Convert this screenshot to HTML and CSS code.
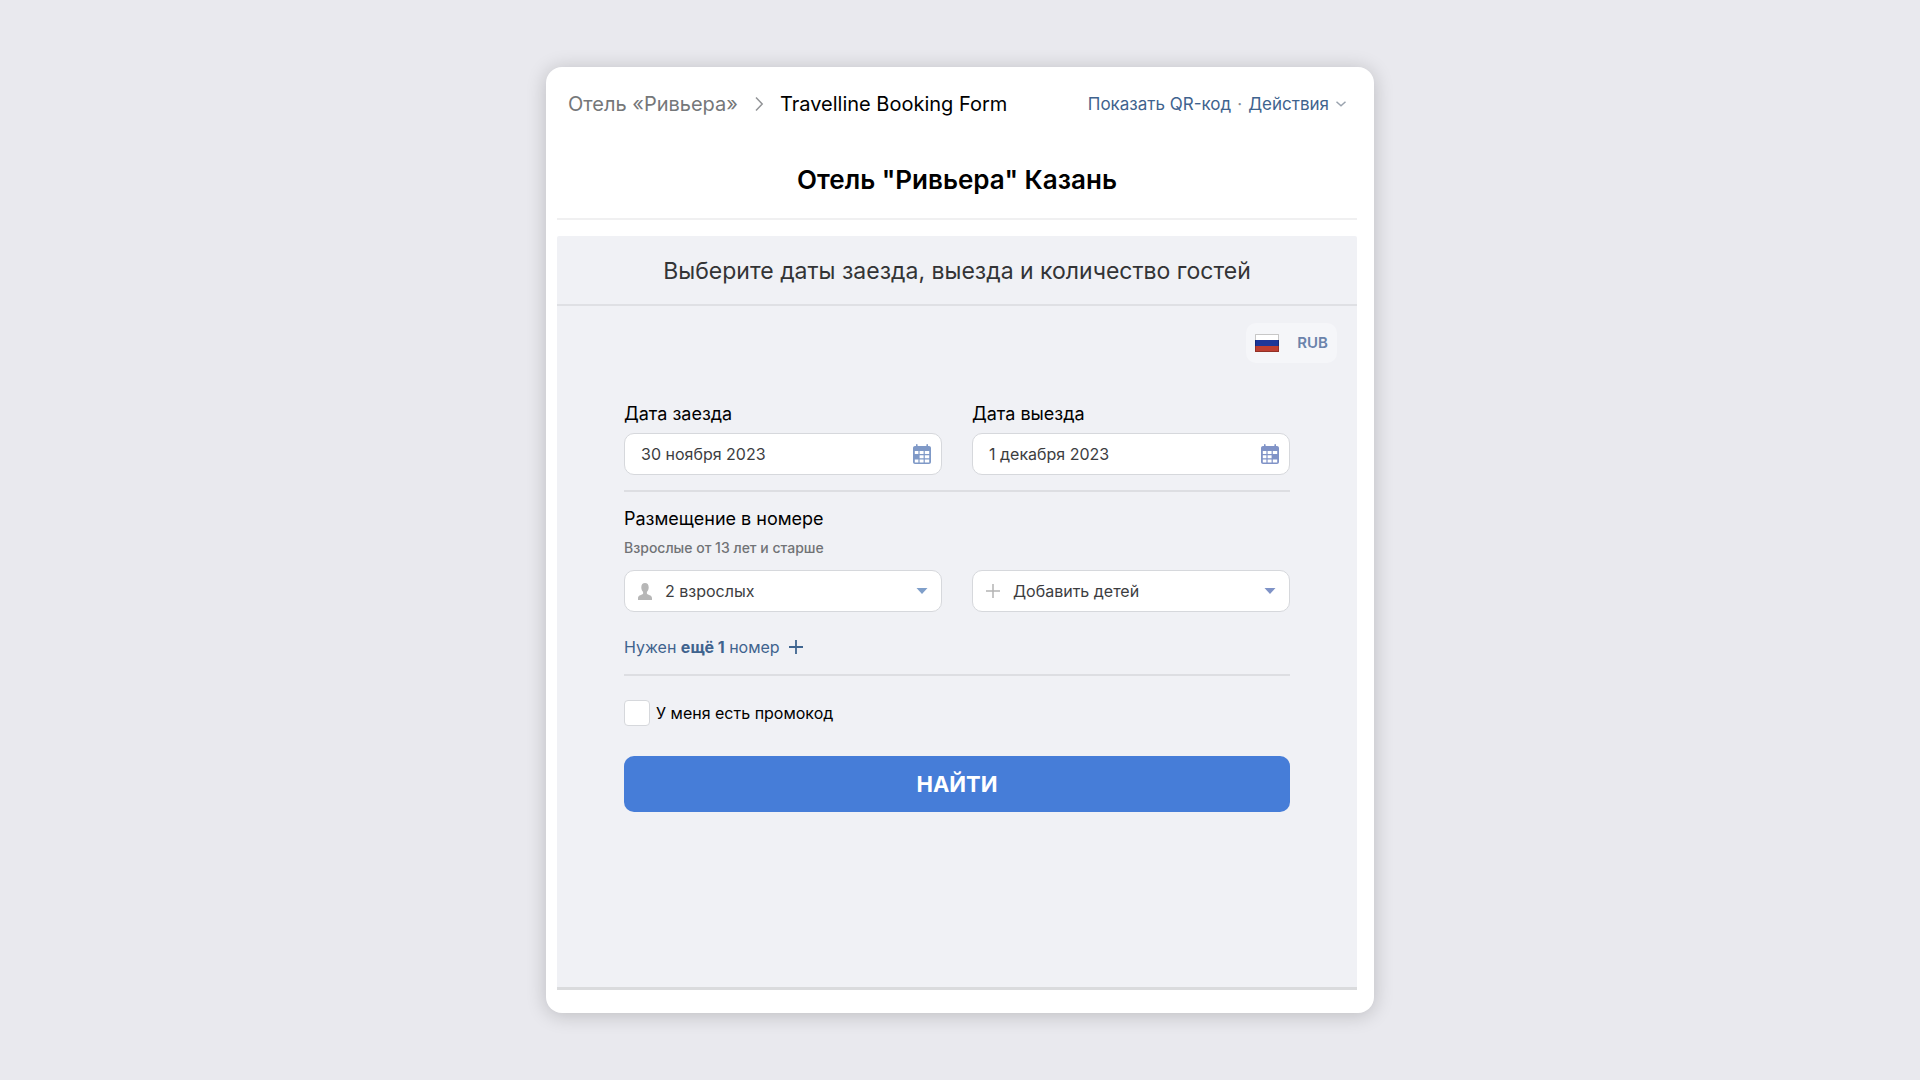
FILE: index.html
```html
<!DOCTYPE html>
<html lang="ru">
<head>
<meta charset="utf-8">
<meta name="viewport" content="width=device-width, initial-scale=1">
<title>Travelline Booking Form</title>
<link rel="stylesheet" href="styles.css">
</head>
<body>
<main class="card">
  <header class="topbar">
    <nav class="crumbs">
      <a class="crumb-link" href="#">Отель «Ривьера»</a>
      <svg class="crumb-arrow" width="10" height="16" viewBox="0 0 10 16"><path d="M2 1.5 8.2 8 2 14.5"/></svg>
      <span>Travelline Booking Form</span>
    </nav>
    <div class="actions">
      <a href="#">Показать QR-код</a>
      <span class="dot">·</span>
      <a class="menu-link" href="#">Действия
        <svg class="chevron" width="12" height="8" viewBox="0 0 12 8"><path d="M1.5 1.700 6 5.700l4.500-4"/></svg>
      </a>
    </div>
  </header>
  <h1 class="title">Отель "Ривьера" Казань</h1>
  <section class="panel">
    <h2 class="panel-title">Выберите даты заезда, выезда и количество гостей</h2>
    <div class="locale">
      <button class="locale-button" type="button" aria-label="Русский">
        <svg width="24" height="18" viewBox="0 0 24 18"><path fill="#fff" d="M0 0h24v6H0z"/><path fill="#1d3799" d="M0 6h24v6H0z"/><path fill="#bd3e31" d="M0 12h24v6H0z"/><path fill="none" stroke="#000" stroke-opacity=".22" d="M.5.5h23v17H.5z"/></svg>
      </button>
      <button class="locale-button" type="button">RUB</button>
    </div>
    <form class="form">
      <div class="columns ruled">
        <div class="group">
          <label class="label" for="arrival">Дата заезда</label>
          <div class="field">
            <input class="control" id="arrival" type="text" value="30 ноября 2023">
            <svg class="icon-right" width="20" height="20" viewBox="0 0 20 20"><path fill="#7f99c7" fill-rule="evenodd" d="M3 2h1V.8C4 .3 4.300 0 4.800 0s.8.300.8.800V2h8.800V.8c0-.5.300-.8.800-.8s.8.300.8.800V2h1c1.100 0 2 .9 2 2v14c0 1.100-.9 2-2 2H3c-1.100 0-2-.9-2-2V4c0-1.100.9-2 2-2zM2.800 7v3h3.600V7zM7.600 7v3h4V7zM12.800 7v3h4.400V7zM7.600 11.200v3h4v-3zM12.800 11.200v3h4.400v-3zM2.800 15.400v3h3.600v-3zM7.600 15.400v3h4v-3zM12.800 15.400v3h4.400v-3z"/></svg>
          </div>
        </div>
        <div class="group">
          <label class="label" for="departure">Дата выезда</label>
          <div class="field">
            <input class="control" id="departure" type="text" value="1 декабря 2023">
            <svg class="icon-right" width="20" height="20" viewBox="0 0 20 20"><path fill="#8093c7" fill-rule="evenodd" d="M3 2h1V.8C4 .3 4.300 0 4.800 0s.8.300.8.800V2h8.800V.8c0-.5.300-.8.800-.8s.8.300.8.800V2h1c1.100 0 2 .9 2 2v14c0 1.100-.9 2-2 2H3c-1.100 0-2-.9-2-2V4c0-1.100.9-2 2-2zM2.800 7v3h3.600V7zM7.600 7v3h4V7zM12.800 7v3h4.400V7zM2.800 11.200v3h3.600v-3zM7.600 11.200v3h4v-3zM2.800 15.400v3h3.600v-3zM7.600 15.400v3h4v-3zM12.800 15.400v3h4.400v-3z"/></svg>
          </div>
        </div>
      </div>
      <div class="rooms ruled">
        <h3 class="label">Размещение в номере</h3>
        <p class="hint">Взрослые от 13 лет и старше</p>
        <div class="columns">
          <div class="field">
            <svg class="icon-left" width="14" height="17" viewBox="0 0 14 17"><path fill="#b7b7b7" d="M7 0c2.300 0 3.700 1.600 3.700 4.200 0 2-.7 3.700-1.800 4.800v1.800c.5 1 5.100 1.200 5.100 4.400V17H0v-1.800c0-3.200 4.600-3.400 5.100-4.400V9C4 7.900 3.300 6.200 3.300 4.200 3.300 1.600 4.700 0 7 0z"/></svg>
            <select class="control with-icon" aria-label="Взрослые"><option>2 взрослых</option></select>
            <svg class="icon-right" width="20" height="6" viewBox="0 0 20 6"><path fill="#7f9fca" d="M4.500 0h11L10 6z"/></svg>
          </div>
          <div class="field">
            <svg class="icon-left" width="14" height="14" viewBox="0 0 14 14"><path fill="none" stroke="#b4b4b4" stroke-width="1.500" d="M7 0v14M0 7h14"/></svg>
            <select class="control with-icon" aria-label="Дети"><option>Добавить детей</option></select>
            <svg class="icon-right" width="20" height="6" viewBox="0 0 20 6"><path fill="#7f93c7" d="M4.500 0h11L10 6z"/></svg>
          </div>
        </div>
        <a class="add-room" href="#"><span>Нужен <b>ещё 1</b> номер</span>
          <svg width="14" height="14" viewBox="0 0 14 14"><path fill="none" stroke="#3f6590" stroke-width="1.800" d="M7 0v14M0 7h14"/></svg>
        </a>
      </div>
      <label class="promo"><input class="check" type="checkbox">У меня есть промокод</label>
      <button class="submit" type="submit">НАЙТИ</button>
    </form>
  </section>
</main>
</body>
</html>
```
FILE: styles.css
```css
* {
  box-sizing: border-box;
}

body {
  display: flex;
  justify-content: center;
  min-height: 100vh;
  margin: 0;
  padding: 67px 16px;
  background: #e9e9ee;
  color: #000;
  font-family: Inter, "Noto Sans", sans-serif;
  font-size: 16px;
  line-height: 24px;
}

a {
  color: #3f638e;
  text-decoration: none;
}

h1, h2, h3, p {
  margin: 0;
}

button, input, select {
  font: inherit;
}

.card {
  display: flex;
  flex-direction: column;
  width: 100%;
  max-width: 828px;
  padding: 0 17px 23px 11px;
  border-radius: 16px;
  background: #fff;
  box-shadow: 0 2px 20px rgba(0, 0, 0, 0.2);
}

.topbar {
  display: flex;
  flex-wrap: wrap;
  align-items: center;
  justify-content: space-between;
  gap: 12px;
  padding: 25px 10px 24px 11px;
}

.crumbs {
  display: flex;
  align-items: center;
  gap: 16px;
  font-size: 20px;
}

.crumb-link {
  color: #757779;
}

.crumb-arrow {
  fill: none;
  stroke: #929497;
  stroke-width: 1.5;
}

.actions,
.menu-link {
  display: flex;
  align-items: center;
  gap: 6px;
  font-size: 17px;
}

.dot {
  color: #8a8f96;
}

.chevron {
  fill: none;
  stroke: #9aa3ae;
  stroke-width: 1.5;
}

.title {
  padding: 24px 0 22px;
  border-bottom: 2px solid #f0f0f1;
  font-size: 26px;
  font-weight: 600;
  line-height: 32px;
  text-align: center;
}

.panel {
  flex: 1;
  margin-top: 16px;
  border-bottom: 3px solid #dadbdd;
  border-radius: 2px 2px 0 0;
  background: #f0f1f5;
}

.panel-title {
  padding: 19px 0 17px;
  border-bottom: 2px solid #dfe0e4;
  color: #333436;
  font-size: 23px;
  font-weight: 400;
  line-height: 32px;
  text-align: center;
}

.locale {
  display: flex;
  width: max-content;
  margin: 17px 20px 0 auto;
  border-radius: 10px;
  background: #f5f6f9;
}

.locale-button {
  display: flex;
  align-items: center;
  height: 40px;
  padding: 0 9px;
  border: 0;
  background: none;
  color: #6b83ab;
  font-size: 15px;
  font-weight: 600;
}

.form {
  padding: 39px 67px 32px;
}

.columns {
  display: grid;
  grid-template-columns: 1fr 1fr;
  gap: 30px;
}

.ruled {
  padding-bottom: 15px;
  border-bottom: 2px solid #dddee2;
}

.label {
  display: block;
  font-size: 18px;
  font-weight: 400;
  line-height: 24px;
}

.group .label {
  margin-bottom: 7px;
}

.field {
  position: relative;
}

.control {
  display: block;
  width: 100%;
  height: 42px;
  padding: 0 44px 0 16px;
  border: 1px solid #d6d8dc;
  border-radius: 10px;
  background: #fff;
  color: #3c3d3f;
  font-size: 16px;
  appearance: none;
}

.with-icon {
  padding-left: 40px;
}

.icon-left,
.icon-right {
  position: absolute;
  top: 0;
  bottom: 0;
  margin: auto 0;
  pointer-events: none;
}

.icon-left {
  left: 14px;
}

.icon-right {
  right: 10px;
}

.rooms {
  padding-top: 15px;
}

.hint {
  margin: 5px 0 10px;
  color: #717376;
  font-size: 14px;
  font-weight: 500;
}

.add-room {
  display: flex;
  align-items: center;
  gap: 9px;
  margin-top: 23px;
}

.promo {
  display: flex;
  align-items: center;
  gap: 6px;
  width: max-content;
  margin-top: 24px;
}

.check {
  width: 26px;
  height: 26px;
  margin: 0;
  border: 1px solid #d6d8dc;
  border-radius: 4px;
  background: #fff;
  appearance: none;
}

.submit {
  display: block;
  width: 100%;
  height: 56px;
  margin-top: 30px;
  border: 0;
  border-radius: 10px;
  background: #467dd8;
  color: #fff;
  font-size: 22px;
  font-weight: 700;
}
```
